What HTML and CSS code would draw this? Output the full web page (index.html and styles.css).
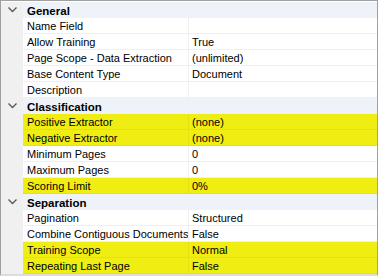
FILE: index.html
```html
<!DOCTYPE html>
<html>
<head>
<meta charset="utf-8">
<link rel="stylesheet" href="styles.css">
</head>
<body>
<div class="grid">
  <div class="cat"><span class="gut"><svg width="9" height="6" viewBox="0 0 9 6"><path d="M0.5 0.5 L4.5 4.5 L8.5 0.5" fill="none" stroke="#5a5a5a" stroke-width="1.4"/></svg></span><span class="cname">General</span></div>
  <div class="row"><span class="gut"></span><span class="k">Name Field</span><span class="v"></span></div>
  <div class="row"><span class="gut"></span><span class="k">Allow Training</span><span class="v">True</span></div>
  <div class="row"><span class="gut"></span><span class="k">Page Scope - Data Extraction</span><span class="v">(unlimited)</span></div>
  <div class="row"><span class="gut"></span><span class="k">Base Content Type</span><span class="v">Document</span></div>
  <div class="row"><span class="gut"></span><span class="k">Description</span><span class="v"></span></div>
  <div class="cat"><span class="gut"><svg width="9" height="6" viewBox="0 0 9 6"><path d="M0.5 0.5 L4.5 4.5 L8.5 0.5" fill="none" stroke="#5a5a5a" stroke-width="1.4"/></svg></span><span class="cname">Classification</span></div>
  <div class="row hl"><span class="gut"></span><span class="k">Positive Extractor</span><span class="v">(none)</span></div>
  <div class="row hl"><span class="gut"></span><span class="k">Negative Extractor</span><span class="v">(none)</span></div>
  <div class="row"><span class="gut"></span><span class="k">Minimum Pages</span><span class="v">0</span></div>
  <div class="row"><span class="gut"></span><span class="k">Maximum Pages</span><span class="v">0</span></div>
  <div class="row hl"><span class="gut"></span><span class="k">Scoring Limit</span><span class="v">0%</span></div>
  <div class="cat"><span class="gut"><svg width="9" height="6" viewBox="0 0 9 6"><path d="M0.5 0.5 L4.5 4.5 L8.5 0.5" fill="none" stroke="#5a5a5a" stroke-width="1.4"/></svg></span><span class="cname">Separation</span></div>
  <div class="row"><span class="gut"></span><span class="k">Pagination</span><span class="v">Structured</span></div>
  <div class="row"><span class="gut"></span><span class="k">Combine Contiguous Documents</span><span class="v">False</span></div>
  <div class="row hl"><span class="gut"></span><span class="k">Training Scope</span><span class="v">Normal</span></div>
  <div class="row hl"><span class="gut"></span><span class="k">Repeating Last Page</span><span class="v">False</span></div>
</div>
</body>
</html>
```
FILE: styles.css
```css
html, body { margin: 0; padding: 0; background: #ffffff; }
body { font-family: "Liberation Sans", Arial, sans-serif; font-size: 11px; color: #000; }
.grid {
  width: 376px;
  border: 1px solid #a0a0a0;
  border-bottom: 2px solid #dcdcdc;
  padding-top: 1px;
  background: #fff;
}
.row, .cat {
  display: flex;
  height: 16px;
  align-items: stretch;
}
.gut {
  width: 22px;
  flex: none;
  background: #f0f0f0;
  display: flex;
  align-items: center;
  justify-content: center;
}
.cat { background: #eef2f9; }
.cat .gut { background: #f0f0f0; }
.cname {
  font-weight: bold;
  padding-left: 4px;
  padding-top: 2px;
  line-height: 14px;
  font-size: 11.5px;
}
.k, .v {
  padding-top: 2px;
  line-height: 13px;
  border-bottom: 1px solid #f0f0f0;
  white-space: nowrap;
  overflow: hidden;
}
.k {
  width: 161px;
  flex: none;
  padding-left: 4px;
  border-right: 1px solid #f0f0f0;
}
.v {
  flex: 1;
  padding-left: 3px;
}
.hl .k, .hl .v { background: #f0ed12; border-color: #e4e210; }
```
